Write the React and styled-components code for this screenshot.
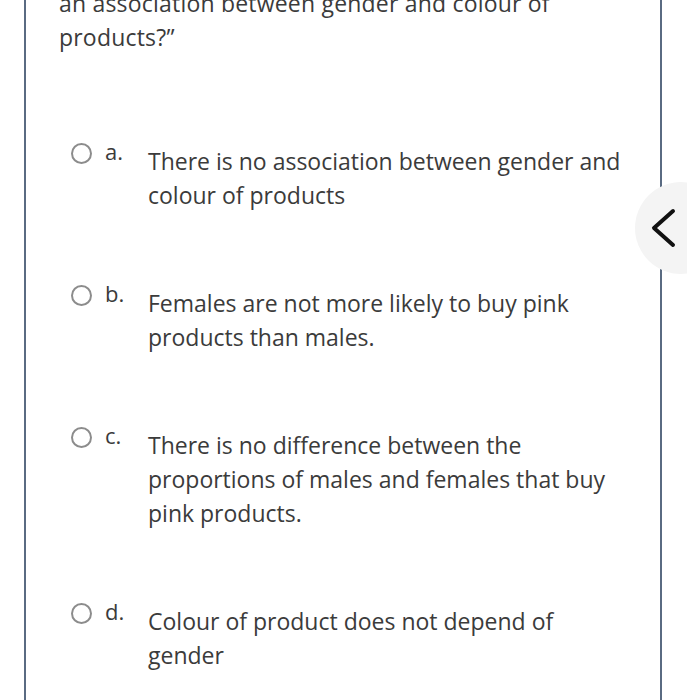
import React from "react";
import styled, { createGlobalStyle } from "styled-components";

const GlobalStyle = createGlobalStyle`
	html, body {
		margin: 0;
		padding: 0;
		background: #ffffff;
		overflow: hidden;
	}
	body {
		font-family: "Open Sans", "Liberation Sans", sans-serif;
		color: #3b3b3b;
	}
`;

const Page = styled.div`
	position: relative;
	width: 687px;
	height: 700px;
	overflow: hidden;
`;

const Card = styled.div`
	margin: -40px 0 0 24px;
	width: 638px;
	min-height: 800px;
	border: 2px solid #5a6b82;
	padding: 24px 30px 0 33px;
	box-sizing: border-box;
`;

const Question = styled.p`
	margin: 0;
	max-width: 530px;
	font-size: 23px;
	line-height: 34px;
	letter-spacing: 0.2px;
`;

const Options = styled.div`
	margin-top: 80px;
	display: flex;
	flex-direction: column;
	gap: 64px;
	padding-left: 12px;
`;

const Option = styled.label`
	display: flex;
	align-items: flex-start;
`;

const Radio = styled.span`
	flex: none;
	margin-top: 9px;
	width: 21px;
	height: 21px;
	border: 2.5px solid #8c8c8c;
	border-radius: 50%;
	box-sizing: border-box;
`;

const Letter = styled.span`
	flex: none;
	width: 43px;
	margin-left: 13px;
	font-size: 22px;
	line-height: 34px;
`;

const Answer = styled.span`
	margin-top: 10px;
	max-width: 482px;
	font-size: 23px;
	line-height: 34px;
`;

const NavButton = styled.button`
	position: absolute;
	left: 635px;
	top: 182px;
	width: 92px;
	height: 92px;
	padding: 0 0 0 14px;
	border: none;
	border-radius: 50%;
	background: #f4f4f4;
	display: flex;
	align-items: center;
	justify-content: flex-start;
	cursor: pointer;
`;

const options = [
	{ letter: "a.", text: "There is no association between gender and colour of products" },
	{ letter: "b.", text: "Females are not more likely to buy pink products than males." },
	{ letter: "c.", text: "There is no difference between the proportions of males and females that buy pink products." },
	{ letter: "d.", text: "Colour of product does not depend of gender" },
];

export default function App() {
	return (
		<Page>
			<GlobalStyle />
			<Card>
				<Question>an association between gender and colour of products?”</Question>
				<Options>
					{options.map((o) => (
						<Option key={o.letter}>
							<Radio />
							<Letter>{o.letter}</Letter>
							<Answer>{o.text}</Answer>
						</Option>
					))}
				</Options>
			</Card>
			<NavButton aria-label="Previous">
				<svg width="28" height="42" viewBox="0 0 28 42">
					<path d="M24 4 L5 21 L24 38" fill="none" stroke="#111" strokeWidth="4" strokeLinecap="round" strokeLinejoin="round" />
				</svg>
			</NavButton>
		</Page>
	);
}
